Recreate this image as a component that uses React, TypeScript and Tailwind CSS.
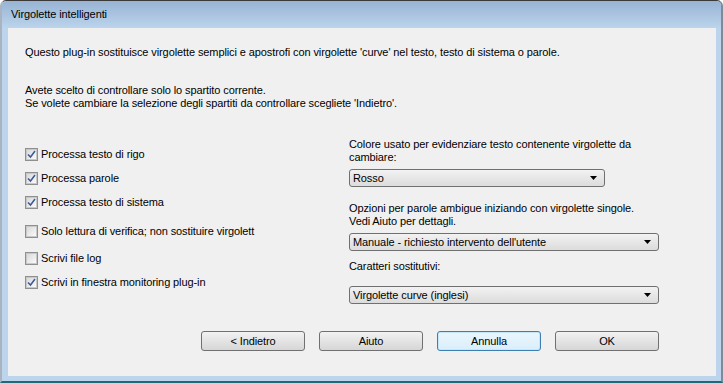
import React from 'react';

const font = { fontFamily: '"Liberation Sans", Arial, sans-serif' };

function Check({ checked }: { checked: boolean }) {
  return (
    <span className="flex h-[13px] w-[13px] shrink-0 items-center justify-center border border-[#8e8f8f] bg-[#f4f4f4]">
      <span className="flex h-[11px] w-[11px] items-center justify-center border border-[#c8c8c8] bg-gradient-to-br from-[#d9d9d9] to-[#fafafa]">
        {checked && (
          <svg width="9" height="9" viewBox="0 0 9 9">
            <path d="M1 4.5 L3.5 7 L8 1" fill="none" stroke="#3c5996" strokeWidth="1.5" />
          </svg>
        )}
      </span>
    </span>
  );
}

function CheckRow({ label, checked, className }: { label: string; checked: boolean; className?: string }) {
  return (
    <div className={`flex h-[16px] items-center gap-[3px] ${className ?? ''}`}>
      <Check checked={checked} />
      <span className="text-[11px] leading-[13px] text-black">{label}</span>
    </div>
  );
}

function Combo({ value, width }: { value: string; width: string }) {
  return (
    <div
      className={`flex h-[18px] ${width} items-center justify-between rounded-[3px] border border-[#707070] bg-gradient-to-b from-[#f2f2f2] to-[#dcdcdc] pl-[3px] pr-[7px]`}
    >
      <span className="text-[11px] leading-[13px] text-black">{value}</span>
      <svg width="7" height="4" viewBox="0 0 7 4">
        <path d="M0 0 H7 L3.5 4 Z" fill="#000" />
      </svg>
    </div>
  );
}

function Btn({ label, focused }: { label: string; focused?: boolean }) {
  return (
    <button
      className={`flex h-[20px] w-[104px] items-center justify-center rounded-[3px] border text-[11px] leading-[13px] text-black ${
        focused
          ? 'border-[#3c7fb1] bg-gradient-to-b from-[#eaf6fd] to-[#d9eefb] shadow-[inset_0_0_0_1px_#c7e6f8]'
          : 'border-[#707070] bg-gradient-to-b from-[#f2f2f2] to-[#d6d6d6]'
      }`}
    >
      {label}
    </button>
  );
}

export default function App() {
  return (
    <div className="h-[383px] w-[723px] overflow-hidden bg-white tracking-[-0.1px]" style={font}>
      <div className="flex h-full w-full flex-col overflow-hidden rounded-t-[6px] border-t border-l-2 border-r-2 border-b-2 border-t-[#3a3a3a] border-l-[#a9b4c0] border-r-[#7d8a98] border-b-[#1b6b78] bg-[#bcd4ec]">
        {/* Title bar */}
        <div className="flex h-[27px] shrink-0 items-center bg-gradient-to-b from-[#98b4d4] to-[#bcd4ec] pl-[9px]">
          <span className="text-[11px] leading-[13px] text-black">Virgolette intelligenti</span>
        </div>

        {/* Client area */}
        <div className="ml-[6px] h-[348px] w-[708px] bg-[#f0f0f0] text-[11px] leading-[13px] text-black">
          <p className="pl-[17px] pt-[18px]">
            Questo plug-in sostituisce virgolette semplici e apostrofi con virgolette 'curve' nel testo, testo di
            sistema o parole.
          </p>
          <div className="mt-[25px] pl-[17px]">
            <p>Avete scelto di controllare solo lo spartito corrente.</p>
            <p>Se volete cambiare la selezione degli spartiti da controllare scegliete 'Indietro'.</p>
          </div>

          <div className="mt-[28px] flex pl-[17px]">
            <div className="flex w-[324px] flex-col pt-[8px]">
              <CheckRow label="Processa testo di rigo" checked />
              <CheckRow label="Processa parole" checked className="mt-[8px]" />
              <CheckRow label="Processa testo di sistema" checked className="mt-[8px]" />
              <CheckRow label="Solo lettura di verifica; non sostituire virgolett" checked={false} className="mt-[13px]" />
              <CheckRow label="Scrivi file log" checked={false} className="mt-[11px]" />
              <CheckRow label="Scrivi in finestra monitoring plug-in" checked className="mt-[8px]" />
            </div>

            <div className="flex flex-col">
              <p>Colore usato per evidenziare testo contenente virgolette da</p>
              <p>cambiare:</p>
              <div className="mt-[5px]">
                <Combo value="Rosso" width="w-[256px]" />
              </div>
              <p className="mt-[15px]">Opzioni per parole ambigue iniziando con virgolette singole.</p>
              <p>Vedi Aiuto per dettagli.</p>
              <div className="mt-[5px]">
                <Combo value="Manuale - richiesto intervento dell'utente" width="w-[310px]" />
              </div>
              <p className="mt-[9px]">Caratteri sostitutivi:</p>
              <div className="mt-[13px]">
                <Combo value="Virgolette curve (inglesi)" width="w-[310px]" />
              </div>
            </div>
          </div>

          <div className="mt-[27px] flex justify-end gap-[14px] pr-[57px]">
            <Btn label="< Indietro" />
            <Btn label="Aiuto" />
            <Btn label="Annulla" focused />
            <Btn label="OK" />
          </div>
        </div>
      </div>
    </div>
  );
}
